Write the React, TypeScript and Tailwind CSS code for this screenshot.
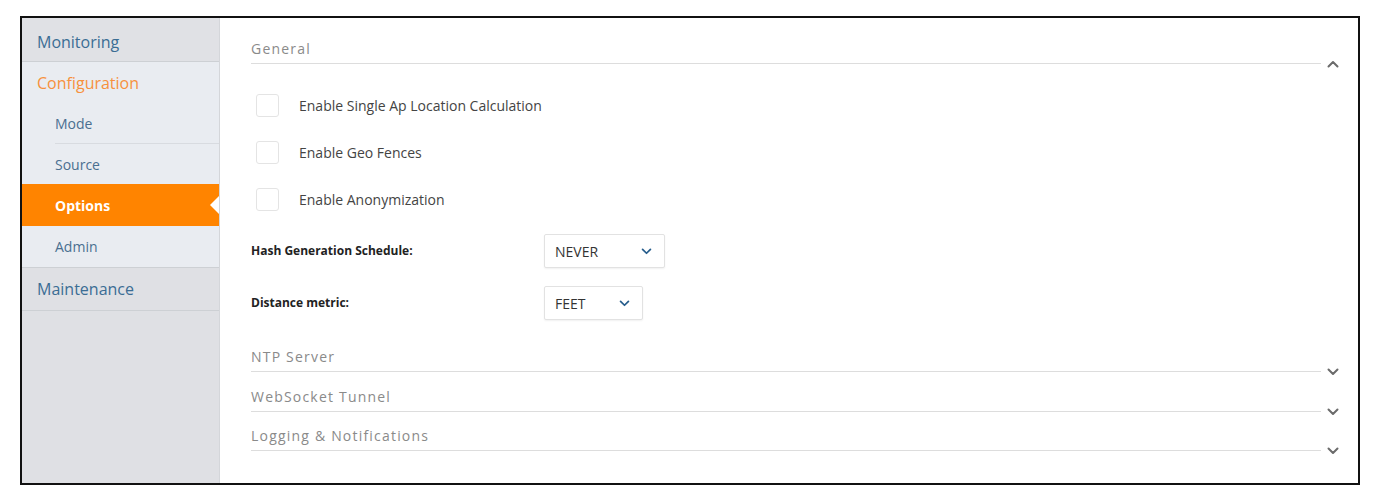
import React from "react";

const font = { fontFamily: '"Open Sans", "Noto Sans", sans-serif' };

function Chevron({ up, className }: { up?: boolean; className?: string }) {
  return (
    <svg viewBox="0 0 12 8" className={className} fill="none">
      <path
        d={up ? "M1.5 6.5 L6 2 L10.5 6.5" : "M1.5 1.5 L6 6 L10.5 1.5"}
        stroke="currentColor"
        strokeWidth="2"
        strokeLinecap="round"
        strokeLinejoin="round"
      />
    </svg>
  );
}

function SectionHeader(props: { title: string; open?: boolean; className?: string }) {
  return (
    <div className={`flex items-end ${props.className ?? "h-[40px]"}`}>
      <div className="flex-1 border-b border-[#dddddd] pb-[5px] text-[14px] leading-[19px] tracking-[1.2px] text-[#8a8a8a]">
        {props.title}
      </div>
      <Chevron
        up={props.open}
        className="w-[12px] h-[8px] ml-[6px] mb-[-4px] mr-[1px] text-[#6b6b6b]"
      />
    </div>
  );
}

function CheckRow({ label }: { label: string }) {
  return (
    <div className="flex items-center h-[47px]">
      <div className="ml-[5px] w-[23px] h-[23px] border border-[#e4e4e4] rounded-[3px] bg-white" />
      <span className="ml-[20px] text-[14px] text-[#444]">{label}</span>
    </div>
  );
}

function SelectRow(props: { label: string; value: string; width: string }) {
  return (
    <div className="flex items-center h-[34px]">
      <span className="w-[293px] text-[12px] font-bold text-[#222]">{props.label}</span>
      <div
        className={`${props.width} h-[34px] flex items-center justify-between pl-[10px] pr-[12px] border border-[#e2e2e2] rounded-[2px] shadow-[0_1px_2px_rgba(0,0,0,0.06)] bg-white`}
      >
        <span className="text-[14px] text-[#333]">{props.value}</span>
        <Chevron className="w-[11px] h-[7px] text-[#265d8c]" />
      </div>
    </div>
  );
}

function SideItem(props: { label: string; active?: boolean; last?: boolean; height: string }) {
  if (props.active) {
    return (
      <div className={`relative ${props.height} flex items-center pl-[33px] bg-[#ff8400] text-white font-bold text-[14px]`}>
        {props.label}
        <div className="absolute right-0 top-1/2 -translate-y-1/2 w-0 h-0 border-y-[9px] border-y-transparent border-r-[9px] border-r-white" />
      </div>
    );
  }
  return (
    <div className="pl-[33px]">
      <div
        className={`${props.height} flex items-center text-[14px] text-[#4a6f90] ${props.last ? "" : "border-b border-[#d8dbe0]"}`}
      >
        {props.label}
      </div>
    </div>
  );
}

export default function App() {
  return (
    <div className="w-[1376px] h-[500px] bg-white pt-[16px] pl-[20px]" style={font}>
      <div className="w-[1340px] h-[469px] border-2 border-[#111] flex">
        <aside className="w-[198px] bg-[#dfe0e4] border-r border-[#d4d6da]">
          <div className="h-[44px] flex items-center pt-[4px] pl-[15px] text-[16px] text-[#3b6d94] bg-[#e0e1e5] border-b border-[#cdd0d4]">
            Monitoring
          </div>
          <div className="bg-[#e9ecf1] border-b border-[#cdd0d4]">
            <div className="h-[42px] flex items-center pl-[15px] text-[16px] text-[#f7913d]">
              Configuration
            </div>
            <SideItem label="Mode" height="h-[40px]" />
            <SideItem label="Source" height="h-[40px]" last />
            <SideItem label="Options" height="h-[42px]" active />
            <SideItem label="Admin" height="h-[41px]" last />
          </div>
          <div className="h-[43px] flex items-center pl-[15px] text-[16px] text-[#3b6d94] border-b border-[#cdd0d4]">
            Maintenance
          </div>
        </aside>

        <main className="flex-1 pl-[31px] pr-[18px]">
          <SectionHeader title="General" open className="h-[46px]" />
          <div className="mt-[18px]">
            <CheckRow label="Enable Single Ap Location Calculation" />
            <CheckRow label="Enable Geo Fences" />
            <CheckRow label="Enable Anonymization" />
          </div>
          <div className="mt-[11px] flex flex-col gap-[18px]">
            <SelectRow label="Hash Generation Schedule:" value="NEVER" width="w-[121px]" />
            <SelectRow label="Distance metric:" value="FEET" width="w-[99px]" />
          </div>
          <SectionHeader title="NTP Server" className="h-[40px] mt-[12px]" />
          <SectionHeader title="WebSocket Tunnel" />
          <SectionHeader title="Logging & Notifications" className="h-[39px]" />
        </main>
      </div>
    </div>
  );
}
